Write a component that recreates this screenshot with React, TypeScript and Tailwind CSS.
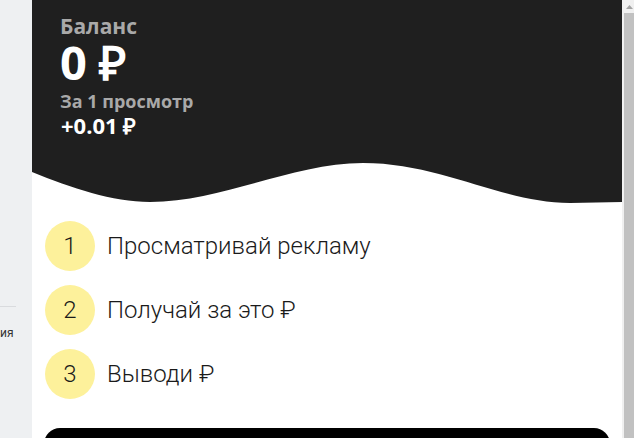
const steps = [
  { n: "1", text: "Просматривай рекламу" },
  { n: "2", text: "Получай за это ₽" },
  { n: "3", text: "Выводи ₽" },
];

const Wave = () => (
  <svg viewBox="0 0 590 46" width="590" height="46" className="block shrink-0" preserveAspectRatio="none">
    <path
      d="M0,12 C40,28 80,42 118,42 C190,42 260,3 331,3 C410,3 470,43 538,43 L590,42 V0 H0 Z"
      fill="#1f1f1f"
    />
  </svg>
);

export default function App() {
  return (
    <div className="flex h-[438px] w-[634px] overflow-hidden bg-white">
      {/* side strip */}
      <div className="relative w-8 shrink-0 bg-[#eef0f2]">
        <div className="mt-[306px] h-px w-4 bg-[#d9dbde]" />
        <div className="mt-[20px] text-[12px] leading-none text-[#333] font-['Roboto',sans-serif]">ия</div>
      </div>

      {/* main panel */}
      <div className="relative flex w-[590px] shrink-0 flex-col bg-white">
        <div className="h-[160px] shrink-0 bg-[#1f1f1f] pl-[28px] pt-[14px] font-['Open_Sans',sans-serif] font-bold">
          <div className="text-[21px] leading-[24px] text-[#a9a9a9]">Баланс</div>
          <div className="text-[47px] leading-[48px] text-white">0 ₽</div>
          <div className="mt-[4px] text-[18px] leading-[22px] text-[#a9a9a9]">За 1 просмотр</div>
          <div className="pl-[1px] text-[22px] leading-[26px] text-white">+0.01 ₽</div>
        </div>
        <Wave />

        <div className="flex shrink-0 flex-col gap-[14px] pl-[13px] pt-[15px] font-['Roboto',sans-serif] font-light">
          {steps.map((s) => (
            <div key={s.n} className="flex items-center gap-[12px]">
              <div className="flex h-[50px] w-[50px] items-center justify-center rounded-full bg-[#fdf19b] text-[24px] text-[#1a1a1a]">
                {s.n}
              </div>
              <span className="text-[24px] text-[#1a1a1a]">{s.text}</span>
            </div>
          ))}
        </div>

        <div className="mx-[12px] mt-[29px] h-[40px] shrink-0 rounded-[16px] bg-black" />
      </div>

      {/* scrollbar */}
      <div className="flex w-3 shrink-0 flex-col bg-[#f0f0f0]">
        <div className="flex h-[13px] items-center justify-center pl-[2px]">
          <svg width="7" height="4" viewBox="0 0 7 4">
            <path d="M3.5,0 L7,4 H0 Z" fill="#a3a3a3" />
          </svg>
        </div>
        <div className="ml-[2px] flex-1 bg-[#c1c1c1]" />
      </div>
    </div>
  );
}
